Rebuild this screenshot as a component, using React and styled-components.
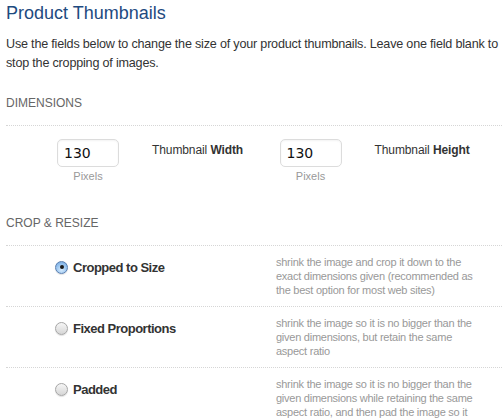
import React from 'react';
import styled, { createGlobalStyle } from 'styled-components';

const GlobalStyle = createGlobalStyle`
  body {
    margin: 0;
    background: #fff;
    font-family: "Liberation Sans", Arial, sans-serif;
    color: #333;
  }
`;

const Page = styled.div`
  width: 502px;
  padding: 0 0 0 6px;
  box-sizing: border-box;
`;

const Title = styled.h2`
  margin: 2px 0 0;
  font-size: 18px;
  line-height: 22px;
  font-weight: normal;
  color: #1e4a80;
`;

const Intro = styled.p`
  margin: 11px 0 0;
  font-size: 12.6px;
  line-height: 19px;
  letter-spacing: -0.2px;
  color: #333;
`;

const SectionHeading = styled.h3`
  margin: ${({ $top }) => $top}px 0 0;
  padding-bottom: ${({ $gap }) => $gap}px;
  border-bottom: 1px dotted #d6d6d6;
  font-size: 12px;
  line-height: 16px;
  font-weight: normal;
  text-transform: uppercase;
  color: #666;
`;

const DimRow = styled.div`
  display: flex;
  padding: 13px 0 0 51px;
`;

const DimField = styled.div`
  display: flex;
  width: 228px;
`;

const InputBlock = styled.div`
  display: flex;
  flex-direction: column;
  align-items: center;
  width: 62px;
`;

const SizeInput = styled.input`
  width: 62px;
  height: 28px;
  box-sizing: border-box;
  padding: 0 6px;
  border: 1px solid #dcdcdc;
  border-radius: 5px;
  box-shadow: inset 0 1px 2px rgba(0, 0, 0, 0.05);
  font-family: "DejaVu Sans", Verdana, sans-serif;
  font-size: 14px;
  color: #111;
  outline: none;
`;

const Unit = styled.span`
  margin-top: 2px;
  font-size: 11px;
  line-height: 14px;
  color: #999;
`;

const FieldLabel = styled.label`
  margin-left: 33px;
  padding-top: 3px;
  font-size: 12px;
  line-height: 16px;
  letter-spacing: -0.1px;
  color: #333;

  b {
    font-weight: bold;
  }
`;

const OptionRow = styled.div`
  display: flex;
  padding: 9px 0 9px;
  border-bottom: ${({ $last }) => ($last ? 'none' : '1px dotted #d6d6d6')};
`;

const OptionLabel = styled.label`
  display: flex;
  align-items: center;
  gap: 5px;
  width: 270px;
  height: 20px;
  padding: 2px 0 0 49px;
  box-sizing: content-box;
  font-size: 13px;
  font-weight: bold;
  letter-spacing: -0.5px;
  color: #333;
`;

const Radio = styled.span`
  position: relative;
  flex: none;
  width: 13px;
  height: 13px;
  border-radius: 50%;
  box-sizing: border-box;
  border: 1px solid ${({ $checked }) => ($checked ? '#5a7fb0' : '#a6a6a6')};
  background: ${({ $checked }) =>
    $checked
      ? 'radial-gradient(circle at 50% 70%, #d6ebfd 0%, #93c1ee 60%, #6f9fd6 100%)'
      : 'linear-gradient(#f6f6f6, #d6d6d6)'};
  box-shadow: 0 1px 1px rgba(0, 0, 0, 0.12);

  &::after {
    content: '';
    display: ${({ $checked }) => ($checked ? 'block' : 'none')};
    position: absolute;
    left: 50%;
    top: 50%;
    width: 4px;
    height: 4px;
    margin: -2px 0 0 -2px;
    border-radius: 50%;
    background: #1a1a1a;
  }
`;

const OptionDesc = styled.p`
  margin: 0 0 0 -49px;
  width: 202px;
  font-size: 11px;
  line-height: 14px;
  letter-spacing: -0.25px;
  color: #999;
`;

const options = [
  {
    label: 'Cropped to Size',
    checked: true,
    desc: 'shrink the image and crop it down to the exact dimensions given (recommended as the best option for most web sites)',
  },
  {
    label: 'Fixed Proportions',
    desc: 'shrink the image so it is no bigger than the given dimensions, but retain the same aspect ratio',
  },
  {
    label: 'Padded',
    desc: 'shrink the image so it is no bigger than the given dimensions while retaining the same aspect ratio, and then pad the image so it matches the given dimensions',
  },
];

const App = () => (
  <Page>
    <GlobalStyle />
    <Title>Product Thumbnails</Title>
    <Intro>
      Use the fields below to change the size of your product thumbnails. Leave one field blank to
      stop the cropping of images.
    </Intro>

    <SectionHeading $top={22} $gap={14}>Dimensions</SectionHeading>
    <DimRow>
      <DimField>
        <InputBlock>
          <SizeInput defaultValue="130" />
          <Unit>Pixels</Unit>
        </InputBlock>
        <FieldLabel>
          Thumbnail <b>Width</b>
        </FieldLabel>
      </DimField>
      <DimField>
        <InputBlock>
          <SizeInput defaultValue="130" />
          <Unit>Pixels</Unit>
        </InputBlock>
        <FieldLabel>
          Thumbnail <b>Height</b>
        </FieldLabel>
      </DimField>
    </DimRow>

    <SectionHeading $top={32} $gap={14}>Crop &amp; Resize</SectionHeading>
    {options.map((opt, i) => (
      <OptionRow key={opt.label} $last={i === options.length - 1}>
        <OptionLabel>
          <Radio $checked={opt.checked} />
          {opt.label}
        </OptionLabel>
        <OptionDesc>{opt.desc}</OptionDesc>
      </OptionRow>
    ))}
  </Page>
);

export default App;
